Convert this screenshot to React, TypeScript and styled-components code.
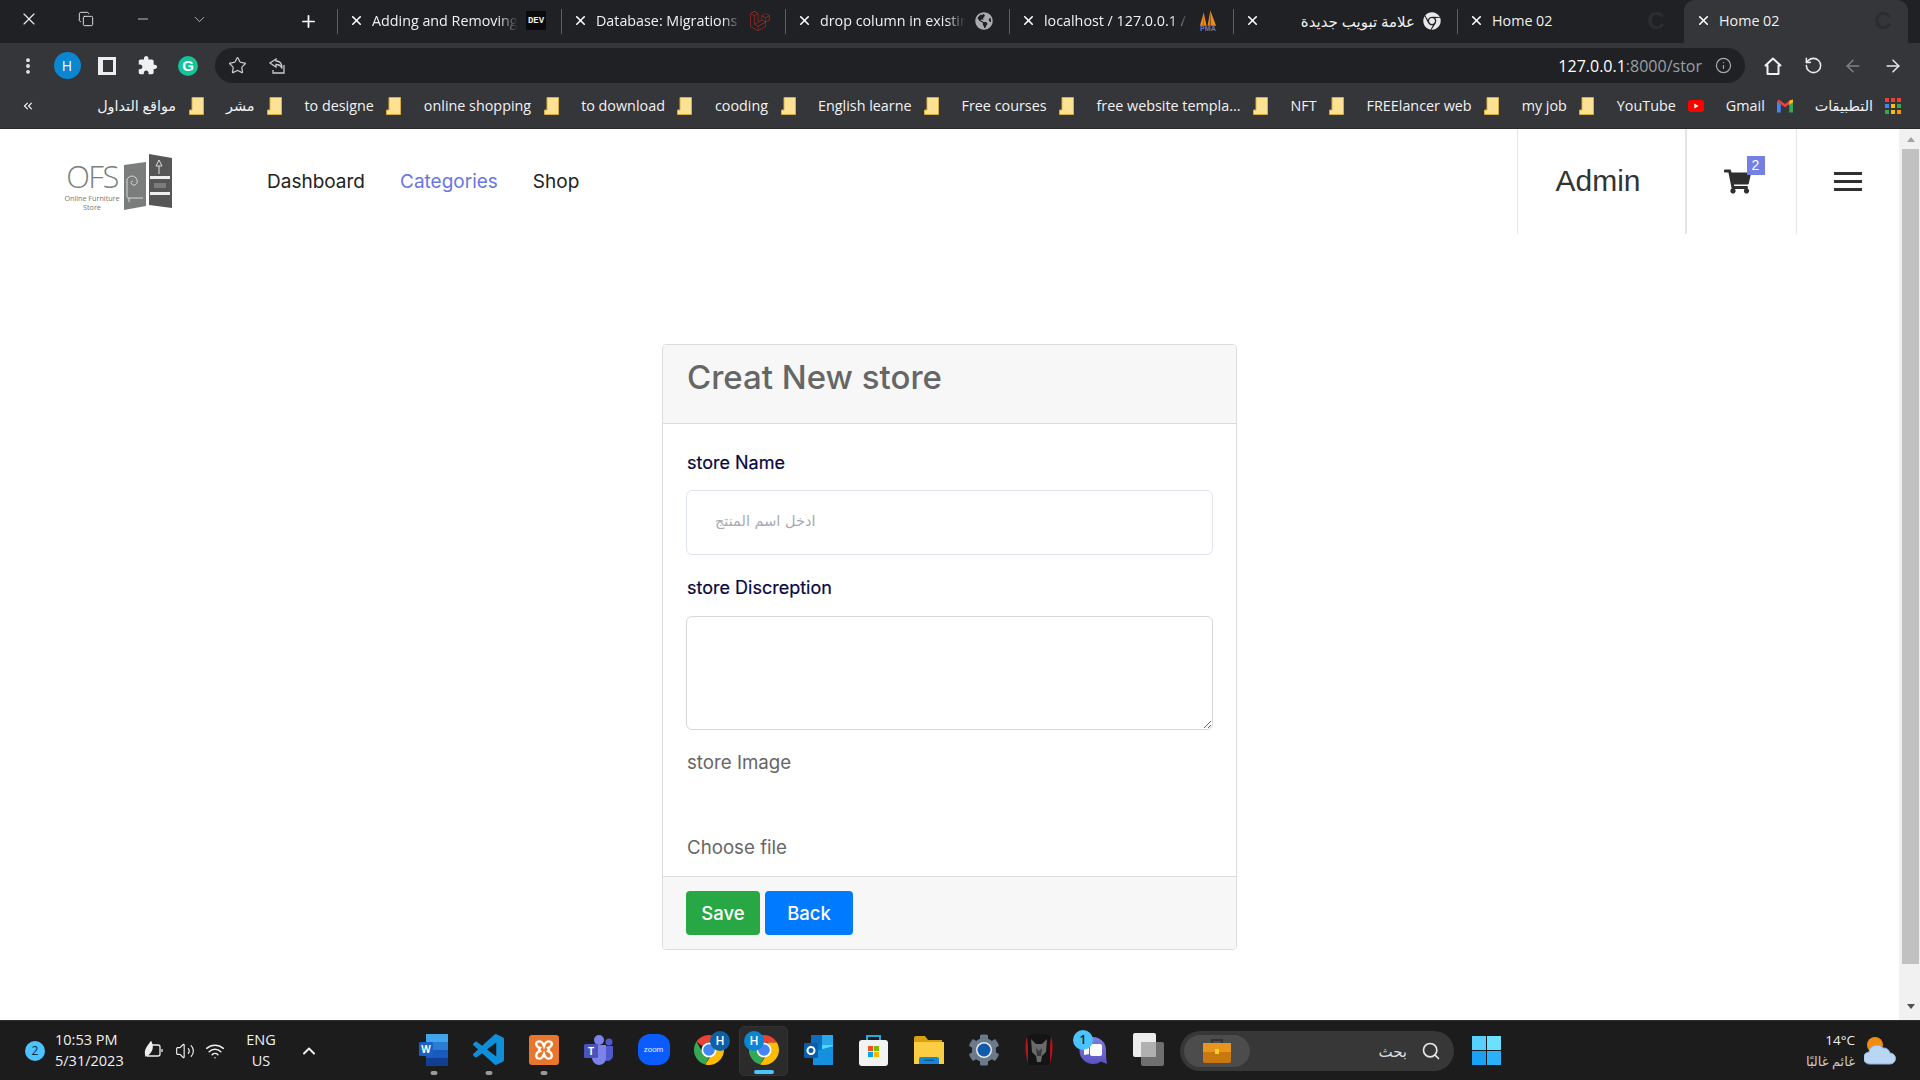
import React from "react";
import styled, { createGlobalStyle } from "styled-components";
import { X, Plus, Minus, Copy, ChevronDown, ChevronUp, Star, RotateCw, ArrowLeft, ArrowRight, Info, Search, Wifi, Volume2, EllipsisVertical, ChevronsLeft } from "lucide-react";
import { FaGlobeAmericas, FaChrome, FaShoppingCart, FaCog } from "react-icons/fa";
import { SiLaravel } from "react-icons/si";

const UI = `"Open Sans", "DejaVu Sans", sans-serif`;

const Global = createGlobalStyle`
  html, body { margin: 0; padding: 0; width: 1920px; height: 1080px; overflow: hidden; background: #fff; }
  #root { width: 1920px; height: 1080px; }
  * { box-sizing: border-box; }
`;

const Screen = styled.div`
  width: 1920px; height: 1080px; display: flex; flex-direction: column; font-family: ${UI};
`;

/* ---------- tab strip ---------- */
const TabStrip = styled.div`
  height: 43px; background: #202124; display: flex; align-items: stretch; flex: none;
`;
const WinControl = styled.div`
  width: 57px; display: flex; align-items: center; justify-content: center; color: #e8e8e8; padding-bottom: 5px;
`;
const NewTab = styled.div`
  width: 109px; display: flex; align-items: center; padding-left: 71px; color: #fff;
`;
const Tab = styled.div<{ $active?: boolean }>`
  width: 224px; height: 43px; display: flex; align-items: center; position: relative; padding: 0 0 2px 12px; color: #fff;
  flex: none;
  ${(p) => p.$active ? `background:#35363a; border-radius: 11px 11px 0 0; margin-left: 3px;` : `
    &::before { content: ""; position: absolute; left: 0; top: 9px; height: 25px; width: 1px; background: #5f6063; }
    padding-left: 12px;
  `}
`;
const TabClose = styled.span`
  width: 15px; display: flex; justify-content: center; flex: none; color: #fff;
`;
const TabTitle = styled.span<{ $rtl?: boolean; $fade?: boolean }>`
  width: 147px; margin-left: 8px; font-size: ${(p) => (p.$rtl ? 15 : 14.3)}px; white-space: nowrap; overflow: hidden; flex: none;
  color: #f0f0f0; text-align: ${(p) => (p.$rtl ? "right" : "left")};
  direction: ${(p) => (p.$rtl ? "rtl" : "ltr")};
  ${(p) => p.$fade ? `-webkit-mask-image: linear-gradient(90deg,#000 86%,transparent 99%); mask-image: linear-gradient(90deg,#000 86%,transparent 99%);` : ""}
`;
const TabIcon = styled.span`
  width: 20px; height: 20px; margin-left: 7px; display: flex; align-items: center; justify-content: center; flex: none;
`;
const DevBadge = styled.span`
  width: 20px; height: 19px; background: #0a0a0a; color: #eee; font: bold 9px "Liberation Mono", monospace;
  display: flex; align-items: center; justify-content: center;
`;
const FaintC = styled.span`
  font: bold 24px "Liberation Sans", sans-serif; color: #2c2d30;
`;

/* ---------- toolbar ---------- */
const Toolbar = styled.div`
  height: 43px; background: #35363a; display: flex; align-items: flex-start; padding-top: 5px; flex: none;
`;
const ToolSlot = styled.div<{ $w: number; $c?: string; $pl?: number; $pr?: number }>`
  width: ${(p) => p.$w}px; height: 35px; display: flex; align-items: center; justify-content: center; flex: none; color: ${(p) => p.$c || "#e8eaed"};
  padding-left: ${(p) => p.$pl ?? 0}px; padding-right: ${(p) => p.$pr ?? 0}px;
`;
const Avatar = styled.div`
  width: 27px; height: 27px; border-radius: 50%; background: #0b86d1; color: #fff; display: flex; align-items: center; justify-content: center; font-size: 14px;
`;
const SidePanelIcon = styled.div`
  width: 18px; height: 18px; border: 3px solid #eee; border-left-width: 5px; background: #35363a;
`;
const GrammarlyIcon = styled.div`
  width: 20px; height: 20px; border-radius: 50%; background: #15c39a; color: #fff; display: flex; align-items: center; justify-content: center;
  font: bold 15px "Liberation Sans", sans-serif;
`;
const UrlBar = styled.div`
  width: 1530px; height: 35px; background: #202124; border-radius: 18px; display: flex; align-items: center; margin-left: 5px; flex: none; padding-left: 13px;
`;
const UrlIconGroup = styled.div`
  display: flex; gap: 21px; color: #c8c9cb; align-items: center;
`;
const UrlText = styled.div`
  margin-left: auto; font-size: 16px; color: #fff; white-space: nowrap;
`;
const UrlMuted = styled.span`color: #9aa0a6;`;
const UrlInfo = styled.div`
  margin: 0 13px; color: #a8a9ab; display: flex;
`;
const NavIcons = styled.div`
  display: flex; margin-left: 8px;
`;
const FlipIcon = styled.span`
  display: flex; transform: scaleX(-1);
`;

/* ---------- bookmarks ---------- */
const BookmarkBar = styled.div`
  height: 43px; background: #35363a; display: flex; align-items: center; justify-content: space-between; padding: 0 19px 3px 21px; flex: none;
  border-bottom: 1px solid #2a2b2e;
`;
const Chevrons = styled.div`color: #e8eaed; display: flex;`;
const BookmarkList = styled.div`
  display: flex; flex-direction: row-reverse; gap: 22px;
`;
const Bookmark = styled.div`
  display: flex; flex-direction: row-reverse; align-items: center; gap: 12px; color: #f2f2f2; font-size: 14.35px; white-space: nowrap; line-height: 20px;
`;
const BIcon = styled.span`
  width: 16px; height: 18px; display: flex; align-items: center; justify-content: center; flex: none;
`;

/* ---------- page ---------- */
const Viewport = styled.div`
  flex: 1; display: flex; min-height: 0; background: #fff;
`;
const Page = styled.div`
  flex: 1; min-width: 0;
`;
const ScrollTrack = styled.div`
  width: 21px; background: #f1f1f1; display: flex; flex-direction: column; align-items: center; flex: none; padding-left: 2px;
`;
const ScrollArrow = styled.div<{ $down?: boolean }>`
  width: 0; height: 0; border-left: 4px solid transparent; border-right: 4px solid transparent;
  margin: ${(p) => (p.$down ? "40px 0 7px" : "8px 0 7px")};
  ${(p) => (p.$down ? "border-top: 5px solid #505050;" : "border-bottom: 5px solid #a3a3a3;")}
`;
const ScrollThumb = styled.div`
  width: 17px; height: 815px; background: #c1c1c1;
`;
const Header = styled.header`
  height: 105px; display: flex; align-items: stretch; padding-left: 66px;
`;
const Logo = styled.div`
  width: 108px; height: 58px; margin-top: 25px; display: flex; gap: 5px; flex: none;
`;
const LogoWords = styled.div`
  width: 52px; display: flex; flex-direction: column; align-items: center; color: #7b7f7d; padding-top: 4px;
`;
const LogoMark = styled.div`
  font: 300 31px/36px "Open Sans", sans-serif; letter-spacing: -1.5px; height: 36px;
`;
const LogoSub = styled.div`
  font: 7.2px/9px "Open Sans", sans-serif; text-align: center; white-space: nowrap; color: #777;
`;
const MainNav = styled.nav`
  display: flex; gap: 35px; margin-left: 93px; align-items: center; padding-bottom: 1px;
`;
const NavLink = styled.a<{ $active?: boolean }>`
  font: 400 19px "Inter", sans-serif; color: ${(p) => (p.$active ? "#6a76e4" : "#222")};
`;
const HeaderRight = styled.div`
  margin-left: auto; display: flex; align-items: stretch;
`;
const HeadCell = styled.div<{ $w: number; $bw?: number }>`
  width: ${(p) => p.$w}px; display: flex; align-items: center; justify-content: center; border-left: ${(p) => p.$bw ?? 1}px solid #e5e5e5; position: relative; flex: none;
`;
const AdminText = styled.span`
  font: 400 30px "Liberation Sans", sans-serif; color: #333; padding: 0 7px 1px 0;
`;
const CartWrap = styled.div`
  color: #2f2f2f; display: flex; margin-left: -9px; position: relative;
`;
const CartBadge = styled.span`
  position: absolute; left: 23px; top: -12px; width: 18px; height: 19px; background: #7580e2; color: #fff;
  font: 14px/19px "Liberation Sans", sans-serif; text-align: center;
`;
const Burger = styled.div`
  width: 28px; height: 19px; display: flex; flex-direction: column; justify-content: space-between;
`;
const BurgerLine = styled.span`height: 3px; background: #303030;`;

const Card = styled.section`
  width: 575px; margin: 110px auto 0; border: 1px solid #dcdcdc; border-radius: 4px; background: #fff; overflow: hidden;
  font-family: "Inter", sans-serif;
`;
const CardHead = styled.div`
  height: 79px; background: #f7f7f7; border-bottom: 1px solid #dcdcdc; padding: 12px 24px 0;
`;
const CardTitle = styled.h3`
  margin: 0; font: 500 33px/40px "Inter", sans-serif; color: #666;
`;
const CardBody = styled.div`
  padding: 24px 23px 0; height: 452px; display: flex; flex-direction: column;
`;
const FieldLabel = styled.label<{ $muted?: boolean; $gap: number; $top?: number }>`
  display: block; padding-left: 1px;
  font: 400 ${(p) => (p.$muted ? 18.7 : 18)}px/30px "Inter", sans-serif; color: ${(p) => (p.$muted ? "#666" : "#07073f")};
  margin-top: ${(p) => p.$top ?? 0}px; margin-bottom: ${(p) => p.$gap}px; -webkit-text-stroke: ${(p) => (p.$muted ? 0 : 0.2)}px;
`;
const TextInput = styled.input`
  width: 527px; height: 65px; border: 1px solid #dfe3ee; border-radius: 6px; padding: 0 28px 4px; font: 14.5px "DejaVu Sans", sans-serif; background: #fff; outline: none; flex: none;
  &::placeholder { color: #aaa9b2; opacity: 1; }
`;
const TextArea = styled.textarea`
  width: 527px; height: 114px; border: 1px solid #d8d8d8; border-radius: 6px; display: block; resize: vertical; outline: none; flex: none;
`;
const ChooseFile = styled.span`
  font: 400 18.7px/30px "Inter", sans-serif; color: #666; margin-top: 55px; padding-left: 1px;
`;
const CardFoot = styled.div`
  height: 73px; background: #f7f7f7; border-top: 1px solid #dcdcdc; padding: 14px 23px 0; display: flex; gap: 5px; align-items: flex-start;
`;
const Btn = styled.button<{ $bg: string; $w: number }>`
  width: ${(p) => p.$w}px; height: 44px; border: 0; border-radius: 4px; background: ${(p) => p.$bg}; color: #fff; font: 500 18.5px "Inter", sans-serif; padding: 0 0 1px;
`;

/* ---------- taskbar ---------- */
const Taskbar = styled.footer`
  height: 60px; background: #1c1c1c; border-top: 1px solid #2e2e2e; display: flex; align-items: center; color: #f0f0f0; flex: none; position: relative;
`;
const Notif = styled.div`
  width: 20px; height: 20px; border-radius: 50%; background: #4cc2ff; color: #0a2a40; font-size: 12px; display: flex; align-items: center; justify-content: center; margin-left: 25px; flex: none;
`;
const Clock = styled.div`
  margin-left: 10px; width: 80px; font-size: 14.5px; line-height: 21px; flex: none; padding-bottom: 1px;
`;
const Tray = styled.div`
  display: flex; width: 100px; align-items: center; padding-left: 8px; gap: 10px; color: #eee; flex: none;
`;
const Lang = styled.div`
  width: 36px; text-align: center; font-size: 14.5px; line-height: 21px; margin-left: 8px; flex: none; padding-bottom: 1px;
`;
const TrayUp = styled.div`
  width: 20px; margin-left: 20px; display: flex; color: #eee; flex: none;
`;
const AppRow = styled.div`
  display: flex; margin-left: 87px; flex: none;
`;
const AppSlot = styled.div<{ $active?: boolean }>`
  width: 55px; height: 50px; position: relative; display: flex; align-items: center; justify-content: center; flex: none; padding-bottom: 2px;
  ${(p) => p.$active ? "background:#2b2b2b; border:1px solid #333; border-radius: 5px; width: 49px; margin: 0 3px;" : ""}
`;
const RunDot = styled.span<{ $active?: boolean }>`
  position: absolute; left: 50%; bottom: 1px; transform: translateX(-50%); height: 4px; border-radius: 2px;
  width: ${(p) => (p.$active ? 20 : 7)}px; background: ${(p) => (p.$active ? "#4cc2ff" : "#9a9a9a")};
`;
const Pip = styled.span<{ $bg?: string; $c?: string; $l?: number; $t?: number }>`
  position: absolute; left: ${(p) => p.$l ?? 7}px; top: ${(p) => p.$t ?? 4}px; width: 20px; height: 20px; border-radius: 50%; background: ${(p) => p.$bg || "#4cc2ff"}; color: ${(p) => p.$c || "#0b2436"};
  font-size: 12px; font-weight: 600; display: flex; align-items: center; justify-content: center;
`;
const ZoomTile = styled.div`
  width: 32px; height: 31px; border-radius: 12px; background: #0b5cff; color: #e8eefc; font: 8px "Liberation Sans", sans-serif; display: flex; align-items: center; justify-content: center;
`;
const SearchBar = styled.div`
  width: 274px; height: 40px; border-radius: 20px; background: #373737; display: flex; align-items: center; margin-left: 4px; flex: none;
`;
const SearchPill = styled.div`
  width: 66px; height: 32px; border-radius: 16px; background: #4c4c4c; margin-left: 4px; display: flex; align-items: center; justify-content: center; flex: none;
`;
const SearchText = styled.span`
  margin-left: auto; font-size: 15px; color: #ddd;
`;
const SearchGlass = styled.span`
  display: flex; margin: 0 13px 0 14px; color: #e8e8e8;
`;
const WinLogo = styled.div`
  width: 29px; height: 29px; margin-left: 18px; display: grid; grid-template-columns: 1fr 1fr; grid-template-rows: 1fr 1fr; gap: 1px; flex: none;
`;
const WinPane = styled.span<{ $c: string }>`background: ${(p) => p.$c};`;
const Weather = styled.div`
  margin-left: auto; display: flex; align-items: center; gap: 9px; padding-right: 24px;
`;
const WeatherText = styled.div`
  text-align: right; font-size: 13.5px; line-height: 21px; color: #eee;
`;
const WeatherSub = styled.div`color: #c8c8c8; font-size: 13px;`;

/* ---------- drawn icons ---------- */
const Folder = () => (
  <svg width="15" height="18" viewBox="0 0 15 18"><path d="M3 .5h11.5v17H.5v-4.5H3z" fill="#fde293" stroke="#d9ad3b" /></svg>
);
const Chrome = ({ s = 32 }: { s?: number }) => (
  <svg width={s} height={s} viewBox="0 0 32 32">
    <path d="M16 1a15 15 0 0 1 13 7.5H16a7.5 7.5 0 0 0-6.500 3.75L3.500 7.600A15 15 0 0 1 16 1z" fill="#ea4335" />
    <path d="M3.500 7.600l6.500 11.400a7.500 7.500 0 0 0 6 4.500l-3.800 7A15 15 0 0 1 3.500 7.600z" fill="#34a853" />
    <path d="M29 8.500A15 15 0 0 1 12.200 30.500L19 20a7.500 7.500 0 0 0 .5-11.500z" fill="#fbbc04" />
    <circle cx="16" cy="16" r="7.500" fill="#fff" /><circle cx="16" cy="16" r="5.800" fill="#4285f4" />
  </svg>
);
const Word = () => (
  <svg width="29" height="32" viewBox="0 0 29 32">
    <rect x="7" width="22" height="8" fill="#41a5ee" /><rect x="7" y="8" width="22" height="8" fill="#2b7cd3" />
    <rect x="7" y="16" width="22" height="8" fill="#185abd" /><rect x="7" y="24" width="22" height="8" fill="#103f91" />
    <rect y="8" width="14" height="14" rx="1.500" fill="#1a5fc4" />
    <text x="7" y="19" textAnchor="middle" fontSize="10" fontWeight="700" fill="#fff" fontFamily="Liberation Sans">W</text>
  </svg>
);
const VSCode = () => (
  <svg width="31" height="31" viewBox="0 0 24 24"><path fill="#0e8fd8" d="M23.15 2.587L18.21.21a1.494 1.494 0 0 0-1.705.29l-9.46 8.63-4.12-3.128a.999.999 0 0 0-1.276.057L.327 7.261A1 1 0 0 0 .326 8.74L3.899 12 .326 15.26a1 1 0 0 0 .001 1.479L1.65 17.94a.999.999 0 0 0 1.276.057l4.12-3.128 9.46 8.63a1.492 1.492 0 0 0 1.704.29l4.942-2.377A1.5 1.5 0 0 0 24 20.06V3.939a1.5 1.5 0 0 0-.85-1.352zm-5.146 14.861L10.826 12l7.178-5.448v10.896z" /></svg>
);
const Xampp = () => (
  <svg width="30" height="30" viewBox="0 0 30 30">
    <rect width="30" height="30" rx="3" fill="#e8762c" />
    <path d="M8 7c4-2 6 1 7 4 1-3 3-6 7-4 2 2 0 5-3 6 1 1 1 2 0 3 3 1 5 4 3 7-4 2-6-1-7-4-1 3-3 6-7 4-2-3 0-6 3-7-1-1-1-2 0-3-3-1-5-4-3-6z" fill="none" stroke="#fff" strokeWidth="2.400" />
  </svg>
);
const Teams = () => (
  <svg width="30" height="32" viewBox="0 0 30 32">
    <circle cx="15" cy="6" r="5" fill="#7b83eb" /><circle cx="25" cy="8" r="3.500" fill="#5059c9" />
    <path d="M19 12h10v9c0 4-3 6-6 6-1 0-3-1-4-2z" fill="#5059c9" />
    <path d="M8 11h14v13c0 4-3 7-7 7s-7-4-7-7z" fill="#7b83eb" />
    <rect y="10" width="14" height="14" rx="1.500" fill="#4b53bc" />
    <text x="7" y="21" textAnchor="middle" fontSize="10" fontWeight="700" fill="#fff" fontFamily="Liberation Sans">T</text>
  </svg>
);
const Outlook = () => (
  <svg width="30" height="32" viewBox="0 0 30 32">
    <rect x="7" y="1" width="22" height="10" fill="#0f6cbd" /><rect x="18" y="1" width="11" height="10" fill="#28a8ea" />
    <rect x="7" y="11" width="11" height="9" fill="#0078d4" /><rect x="18" y="11" width="11" height="9" fill="#50d9ff" />
    <path d="M9 18l20-6v19H9z" fill="#1490df" />
    <rect y="9" width="14" height="15" rx="1.500" fill="#0a5ea8" /><circle cx="7" cy="16.500" r="3.500" fill="none" stroke="#fff" strokeWidth="2" />
  </svg>
);
const StoreBag = () => (
  <svg width="29" height="32" viewBox="0 0 29 32">
    <path d="M8 7V2h13v5" fill="none" stroke="#26a8e0" strokeWidth="2" />
    <rect y="6" width="29" height="26" rx="3" fill="#f3f3f3" />
    <rect x="9" y="12" width="5" height="5" fill="#f25022" /><rect x="15" y="12" width="5" height="5" fill="#7fba00" />
    <rect x="9" y="18" width="5" height="5" fill="#00a4ef" /><rect x="15" y="18" width="5" height="5" fill="#ffb900" />
  </svg>
);
const Files = () => (
  <svg width="30" height="28" viewBox="0 0 30 28">
    <path d="M0 2a2 2 0 0 1 2-2h9l3 4h14v6H0z" fill="#d9a010" />
    <path d="M0 6h30v22H0z" fill="#fbcd42" />
    <path d="M5 28v-5a2 2 0 0 1 2-2h16a2 2 0 0 1 2 2v5z" fill="#1487d8" /><rect x="10" y="23.500" width="10" height="1.500" fill="#0a5a9e" />
  </svg>
);
const Settings = () => (
  <svg width="32" height="32" viewBox="0 0 32 32">
    <foreignObject width="32" height="32"><FaCog size={32} color="#6b7a8a" /></foreignObject>
    <circle cx="16" cy="16" r="8" fill="#e8e8e8" /><circle cx="16" cy="16" r="6.500" fill="#0f5cab" />
  </svg>
);
const Predator = () => (
  <svg width="30" height="32" viewBox="0 0 30 32">
    <path d="M3 2L9 0h12l6 2c2 6 2 13 1 19l-3 10H5L2 21C1 15 1 8 3 2z" fill="#141414" />
    <path d="M3 2C1 8 1 15 2 21l2 9V12zM27 2c2 6 2 13 1 19l-2 9V12z" fill="#b3141a" />
    <path d="M7 5l5 5h6l5-5-1 13-4 4-1 6h-4l-1-6-4-4z" fill="#6a6a6a" />
    <path d="M12 14l3 3 3-3-1 8h-4z" fill="#3a3a3a" />
  </svg>
);
const Chat = () => (
  <svg width="29" height="32" viewBox="0 0 29 32">
    <defs><linearGradient id="chatFill" x1="0" y1="0" x2="0" y2="1"><stop offset="0" stopColor="#7f7fe0" /><stop offset="1" stopColor="#5c52c0" /></linearGradient></defs>
    <path d="M14 3a13 13 0 0 1 13 13c0 4 0 9 1 14l-6-2.500a13 13 0 0 1-8 2.500A13.500 13.500 0 0 1 14 3z" fill="url(#chatFill)" />
    <rect x="11" y="10" width="12" height="12" rx="2" fill="#fff" /><path d="M5 13l5 1v6l-5 1z" fill="#fff" />
  </svg>
);
const Stacks = () => (
  <svg width="31" height="33" viewBox="0 0 31 33">
    <rect x="8" y="9" width="23" height="24" rx="2" fill="#6f6f6f" /><rect width="23" height="24" rx="2" fill="#ececec" />
    <rect x="8" y="9" width="15" height="15" fill="#b0b0b0" />
  </svg>
);
const Briefcase = () => (
  <svg width="28" height="24" viewBox="0 0 28 24">
    <path d="M9 4V1h10v3" fill="none" stroke="#333" strokeWidth="2" /><rect y="4" width="28" height="20" rx="2" fill="#c9780f" />
    <rect y="4" width="28" height="9" fill="#e8951d" /><rect x="12" y="10" width="4" height="5" fill="#f9d423" />
  </svg>
);
const Cloudy = () => (
  <svg width="32" height="30" viewBox="0 0 32 30">
    <circle cx="11" cy="9" r="8" fill="#f28c0f" />
    <path d="M6 28a6 6 0 0 1-1-12 8 8 0 0 1 14-4 7 7 0 0 1 7 5 5.500 5.500 0 0 1 0 11z" fill="#b9d7f5" stroke="#8fb5e0" />
  </svg>
);
const ShareBack = () => (
  <svg width="18" height="18" viewBox="0 0 18 18" fill="none" stroke="#c8c9cb" strokeWidth="1.300">
    <path d="M8 2L2 6l6 4V7.500c3 0 5 1 6 4 0-5-2-7.500-6-7.500z" /><path d="M16 8v8H5v-3" />
  </svg>
);
const Puzzle = () => (
  <svg width="21" height="21" viewBox="0 0 24 24" fill="#f0f0f0"><path d="M20.5 11H19V7c0-1.100-.9-2-2-2h-4V3.500C13 2.120 11.880 1 10.500 1S8 2.120 8 3.500V5H4c-1.100 0-1.990.9-1.990 2v3.800H3.500c1.490 0 2.700 1.210 2.700 2.700s-1.210 2.700-2.700 2.700H2V20c0 1.100.9 2 2 2h3.800v-1.500c0-1.490 1.210-2.700 2.700-2.700 1.490 0 2.700 1.210 2.700 2.700V22H17c1.100 0 2-.9 2-2v-4h1.500c1.380 0 2.500-1.120 2.500-2.500S21.880 11 20.500 11z" /></svg>
);
const HomeIcon = () => (
  <svg width="20" height="20" viewBox="0 0 20 20" fill="none" stroke="#f0f0f0" strokeWidth="2" strokeLinejoin="round"><path d="M10 2.500L2.500 9.500h2V18h11V9.500h2z" /></svg>
);
const Gmail = () => (
  <svg width="17" height="14" viewBox="0 0 17 14">
    <path d="M0 2v12h4V5z" fill="#4285f4" /><path d="M13 5v9h4V2z" fill="#34a853" />
    <path d="M0 2l2-2 6.500 5L15 0l2 2-8.500 6.500z" fill="#ea4335" /><path d="M13 1.500L17 0v3l-4 3z" fill="#fbbc04" />
  </svg>
);
const Youtube = () => (
  <svg width="19" height="14" viewBox="0 0 19 14"><rect width="19" height="14" rx="3.500" fill="#f00" /><path d="M7.500 4l5 3-5 3z" fill="#fff" /></svg>
);
const AppsGrid = () => {
  const c = ["#ea4335", "#ea4335", "#ea4335", "#4285f4", "#fbbc04", "#34a853", "#34a853", "#fbbc04", "#f29900"];
  return (
    <svg width="16" height="16" viewBox="0 0 16 16">
      {c.map((f, i) => <rect key={i} x={(i % 3) * 6} y={Math.floor(i / 3) * 6} width="4" height="4" fill={f} />)}
    </svg>
  );
};
const Pma = () => (
  <svg width="21" height="24" viewBox="0 0 21 24">
    <path d="M2 17L6 3l3 14zM10 17l3-16 6 16z" fill="#f08a1c" /><path d="M6 3l-1 14h1zM13 1l-1 16h2z" fill="#8a5a20" />
    <text x="10.500" y="23" textAnchor="middle" fontSize="7.500" fontWeight="700" fill="#6c78af" fontFamily="Liberation Sans">PMA</text>
  </svg>
);
const Leaf = () => (
  <svg width="22" height="20" viewBox="0 0 22 20" fill="none" stroke="#eee" strokeWidth="1.300">
    <path d="M6 4h9a2 2 0 0 1 2 2v7a2 2 0 0 1-2 2H4" /><path d="M19 8v3" />
    <path d="M3 15C1 9 5 5 8 1c2 4 2 10-5 14z" fill="#eee" />
  </svg>
);
const DoorMark = () => (
  <svg width="50" height="58" viewBox="0 0 50 58">
    <path d="M1 11l22-3v44L1 56z" fill="#7a7d7b" />
    <path d="M26 0l23 4v50l-23-3z" fill="#565656" />
    <rect x="27" y="22" width="20" height="3" fill="#eee" /><rect x="27" y="38" width="20" height="3" fill="#eee" />
    <rect x="31" y="29" width="12" height="5" fill="#7a7d7b" />
    <path d="M36 20v-8m-3 0l3-6 3 6z" stroke="#ddd" fill="none" />
    <path d="M4 43V26c0-3 6-6 9-2s0 8-3 7 -2-4 0-4M4 44h16M6 44v4" stroke="#d8d8d8" fill="none" />
  </svg>
);

const tabs = [
  { t: "Adding and Removing", fade: true, icon: <DevBadge>DEV</DevBadge> },
  { t: "Database: Migrations", fade: true, icon: <SiLaravel size={20} color="#a82a25" /> },
  { t: "drop column in existing", fade: true, icon: <FaGlobeAmericas size={18} color="#a9abae" /> },
  { t: "localhost / 127.0.0.1 / ", fade: true, icon: <Pma /> },
  { t: "علامة تبويب جديدة", rtl: true, icon: <FaChrome size={18} color="#e8e8e8" /> },
  { t: "Home 02", icon: <FaintC>C</FaintC> },
];

const bookmarks: { t: string; icon: React.ReactNode }[] = [
  { t: "التطبيقات", icon: <AppsGrid /> },
  { t: "Gmail", icon: <Gmail /> },
  { t: "YouTube", icon: <Youtube /> },
  { t: "my job", icon: <Folder /> },
  { t: "FREElancer web", icon: <Folder /> },
  { t: "NFT", icon: <Folder /> },
  { t: "free website templa...", icon: <Folder /> },
  { t: "Free courses", icon: <Folder /> },
  { t: "English learne", icon: <Folder /> },
  { t: "cooding", icon: <Folder /> },
  { t: "to download", icon: <Folder /> },
  { t: "online shopping", icon: <Folder /> },
  { t: "to designe", icon: <Folder /> },
  { t: "مشر", icon: <Folder /> },
  { t: "مواقع التداول", icon: <Folder /> },
];

export default function App() {
  return (
    <>
      <Global />
      <Screen>
        <TabStrip>
          <WinControl><X size={20} strokeWidth={1.4} /></WinControl>
          <WinControl><Copy size={16} strokeWidth={1.4} /></WinControl>
          <WinControl><Minus size={16} strokeWidth={1.2} /></WinControl>
          <WinControl><ChevronDown size={17} strokeWidth={1} /></WinControl>
          <NewTab><Plus size={19} strokeWidth={2.2} /></NewTab>
          {tabs.map((x) => (
            <Tab key={x.t}>
              <TabClose><X size={15} strokeWidth={2.6} /></TabClose>
              <TabTitle $rtl={x.rtl} $fade={x.fade}>{x.t}</TabTitle>
              <TabIcon>{x.icon}</TabIcon>
            </Tab>
          ))}
          <Tab $active>
            <TabClose><X size={15} strokeWidth={2.6} /></TabClose>
            <TabTitle>Home 02</TabTitle>
            <TabIcon><FaintC>C</FaintC></TabIcon>
          </Tab>
        </TabStrip>

        <Toolbar>
          <ToolSlot $w={47} $pl={9}><EllipsisVertical size={20} strokeWidth={2.6} /></ToolSlot>
          <ToolSlot $w={40}><Avatar>H</Avatar></ToolSlot>
          <ToolSlot $w={40}><SidePanelIcon /></ToolSlot>
          <ToolSlot $w={41}><Puzzle /></ToolSlot>
          <ToolSlot $w={42} $pr={2}><GrammarlyIcon>G</GrammarlyIcon></ToolSlot>
          <UrlBar>
            <UrlIconGroup>
              <Star size={19} strokeWidth={1.6} />
              <ShareBack />
            </UrlIconGroup>
            <UrlText>127.0.0.1<UrlMuted>:8000/stor</UrlMuted></UrlText>
            <UrlInfo><Info size={17} strokeWidth={1.7} /></UrlInfo>
          </UrlBar>
          <NavIcons>
            <ToolSlot $w={40}><HomeIcon /></ToolSlot>
            <ToolSlot $w={40}><FlipIcon><RotateCw size={19} strokeWidth={2} /></FlipIcon></ToolSlot>
            <ToolSlot $w={40} $c="#7f8184"><ArrowLeft size={20} strokeWidth={1.8} /></ToolSlot>
            <ToolSlot $w={40}><ArrowRight size={20} strokeWidth={1.8} /></ToolSlot>
          </NavIcons>
        </Toolbar>

        <BookmarkBar>
          <Chevrons><ChevronsLeft size={14} strokeWidth={2.2} /></Chevrons>
          <BookmarkList>
            {bookmarks.map((b) => (
              <Bookmark key={b.t}><BIcon>{b.icon}</BIcon><span>{b.t}</span></Bookmark>
            ))}
          </BookmarkList>
        </BookmarkBar>

        <Viewport>
          <Page>
            <Header>
              <Logo>
                <LogoWords>
                  <LogoMark>OFS</LogoMark>
                  <LogoSub>Online Furniture<br />Store</LogoSub>
                </LogoWords>
                <DoorMark />
              </Logo>
              <MainNav>
                <NavLink>Dashboard</NavLink>
                <NavLink $active>Categories</NavLink>
                <NavLink>Shop</NavLink>
              </MainNav>
              <HeaderRight>
                <HeadCell $w={168}><AdminText>Admin</AdminText></HeadCell>
                <HeadCell $w={111} $bw={2}>
                  <CartWrap>
                    <FaShoppingCart size={27} />
                    <CartBadge>2</CartBadge>
                  </CartWrap>
                </HeadCell>
                <HeadCell $w={103}>
                  <Burger><BurgerLine /><BurgerLine /><BurgerLine /></Burger>
                </HeadCell>
              </HeaderRight>
            </Header>

            <Card>
              <CardHead><CardTitle>Creat New store</CardTitle></CardHead>
              <CardBody>
                <FieldLabel $gap={12}>store Name</FieldLabel>
                <TextInput placeholder="ادخل اسم المنتج" />
                <FieldLabel $top={18} $gap={13}>store Discreption</FieldLabel>
                <TextArea />
                <FieldLabel $muted $top={18} $gap={0}>store Image</FieldLabel>
                <ChooseFile>Choose file</ChooseFile>
              </CardBody>
              <CardFoot>
                <Btn $bg="#28a745" $w={74}>Save</Btn>
                <Btn $bg="#007bff" $w={88}>Back</Btn>
              </CardFoot>
            </Card>
          </Page>
          <ScrollTrack>
            <ScrollArrow />
            <ScrollThumb />
            <ScrollArrow $down />
          </ScrollTrack>
        </Viewport>

        <Taskbar>
          <Notif>2</Notif>
          <Clock>10:53 PM<br />5/31/2023</Clock>
          <Tray>
            <Leaf />
            <Volume2 size={20} strokeWidth={1.4} />
            <Wifi size={20} strokeWidth={1.8} />
          </Tray>
          <Lang>ENG<br />US</Lang>
          <TrayUp><ChevronUp size={20} strokeWidth={2.4} /></TrayUp>
          <AppRow>
            <AppSlot><Word /><RunDot /></AppSlot>
            <AppSlot><VSCode /><RunDot /></AppSlot>
            <AppSlot><Xampp /><RunDot /></AppSlot>
            <AppSlot><Teams /></AppSlot>
            <AppSlot><ZoomTile>zoom</ZoomTile></AppSlot>
            <AppSlot><Chrome /><Pip $bg="#0d5fa8" $c="#fff" $l={29} $t={5}>H</Pip></AppSlot>
            <AppSlot $active><Chrome /><Pip $bg="#0d86d1" $c="#fff" $l={4}>H</Pip><RunDot $active /></AppSlot>
            <AppSlot><Outlook /></AppSlot>
            <AppSlot><StoreBag /></AppSlot>
            <AppSlot><Files /></AppSlot>
            <AppSlot><Settings /></AppSlot>
            <AppSlot><Predator /></AppSlot>
            <AppSlot><Chat /><Pip>1</Pip></AppSlot>
            <AppSlot><Stacks /></AppSlot>
          </AppRow>
          <SearchBar>
            <SearchPill><Briefcase /></SearchPill>
            <SearchText>بحث</SearchText>
            <SearchGlass><Search size={20} strokeWidth={2} /></SearchGlass>
          </SearchBar>
          <WinLogo>
            <WinPane $c="#55d0ff" /><WinPane $c="#6ee0ff" /><WinPane $c="#1aa0f5" /><WinPane $c="#2bb0fa" />
          </WinLogo>
          <Weather>
            <WeatherText>14°C<WeatherSub>غائم غالبًا</WeatherSub></WeatherText>
            <Cloudy />
          </Weather>
        </Taskbar>
      </Screen>
    </>
  );
}
